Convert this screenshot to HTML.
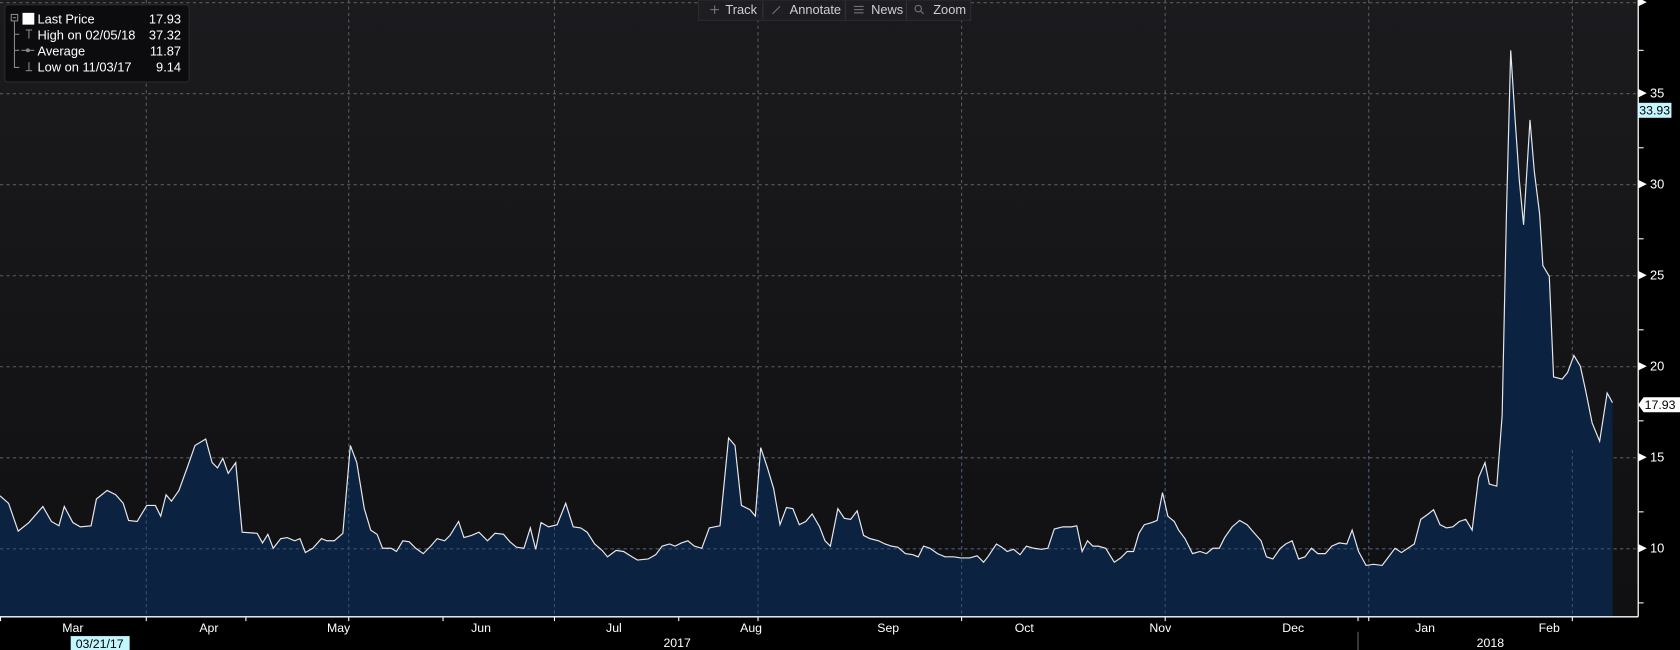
<!DOCTYPE html>
<html><head><meta charset="utf-8"><style>
html,body{margin:0;padding:0;background:#000;overflow:hidden}
svg{display:block}
text{font-family:"Liberation Sans","DejaVu Sans",sans-serif}
</style></head><body>
<svg width="1680" height="650" viewBox="0 0 1568 607" preserveAspectRatio="none" xmlns="http://www.w3.org/2000/svg">
<defs>
<linearGradient id="bg" x1="0" y1="0" x2="0" y2="1"><stop offset="0" stop-color="#1b1b1e"/><stop offset="1" stop-color="#101012"/></linearGradient>
</defs>
<rect x="0" y="0" width="1568" height="607" fill="#000"/>
<rect x="0" y="0" width="1529" height="576" fill="url(#bg)"/>
<g stroke="#5a5a5e" stroke-width="1" stroke-dasharray="3,3">
<line x1="0" y1="2.5" x2="1529" y2="2.5"/>
<line x1="0" y1="87.5" x2="1529" y2="87.5"/>
<line x1="0" y1="172.5" x2="1529" y2="172.5"/>
<line x1="0" y1="257.5" x2="1529" y2="257.5"/>
<line x1="0" y1="342.5" x2="1529" y2="342.5"/>
<line x1="0" y1="427.5" x2="1529" y2="427.5"/>
<line x1="0" y1="512.5" x2="1529" y2="512.5"/>
<line x1="136.5" y1="0" x2="136.5" y2="576"/>
<line x1="325.5" y1="0" x2="325.5" y2="576"/>
<line x1="517.5" y1="0" x2="517.5" y2="576"/>
<line x1="707.5" y1="0" x2="707.5" y2="576"/>
<line x1="897.5" y1="0" x2="897.5" y2="576"/>
<line x1="1087.5" y1="0" x2="1087.5" y2="576"/>
<line x1="1277.5" y1="0" x2="1277.5" y2="576"/>
<line x1="1467.5" y1="0" x2="1467.5" y2="576"/>
</g>
<polygon fill="#0b2340" points="0,576 0,463 8,470 17,496 27,488 40,473 48,487 55,491 60,473 68,488 75,492 85,491 90,466 100,458 108,462 115,470 120,486 128,487 137,472 145,472 150,482 155,462 160,468 167,458 175,436 182,416 192,410 198,432 203,437 208,428 213,442 220,432 226,497 240,498 245,507 250,499 255,512 262,503 268,502 275,505 280,503 285,516 292,512 300,503 305,505 312,505 320,498 327,416 333,432 340,475 346,495 352,499 357,512 365,512 370,515 376,505 382,506 388,512 395,517 402,510 408,503 415,505 420,500 428,487 433,502 440,500 447,497 455,505 462,498 470,499 476,506 482,511 489,512 495,493 500,513 505,488 512,492 520,490 528,470 535,492 542,493 548,497 555,508 562,514 567,520 575,514 582,515 590,520 595,523 605,522 612,518 618,510 625,508 630,510 636,507 642,505 648,510 655,512 662,493 672,491 680,409 686,416 692,472 700,476 705,482 710,418 716,436 722,456 728,490 734,474 740,475 746,490 752,487 758,480 765,492 770,505 775,510 782,475 788,484 794,485 800,477 806,500 812,503 820,505 826,508 832,510 838,511 845,517 852,518 857,520 862,510 868,512 875,517 882,520 890,520 897,521 905,521 912,519 918,525 922,520 930,508 935,511 940,515 946,513 952,518 958,510 965,512 972,513 978,512 984,494 992,492 1000,492 1005,491 1010,515 1015,505 1020,510 1025,510 1032,512 1040,525 1046,521 1052,515 1058,515 1063,498 1068,490 1075,488 1080,486 1085,460 1090,482 1096,487 1100,495 1106,503 1113,517 1120,515 1126,517 1132,512 1138,512 1143,502 1150,492 1157,486 1164,490 1170,497 1177,505 1182,520 1188,522 1195,512 1200,508 1206,505 1212,522 1218,520 1224,512 1230,517 1237,517 1243,510 1250,507 1257,508 1262,495 1268,515 1275,528 1282,527 1290,528 1296,520 1302,512 1308,516 1314,512 1320,508 1326,485 1333,480 1338,476 1344,490 1350,493 1356,492 1362,487 1368,485 1374,495 1380,446 1386,432 1390,452 1397,454 1402,388 1406,200 1410,47 1414,110 1418,168 1422,210 1428,112 1432,160 1437,200 1440,248 1446,258 1450,352 1458,354 1463,348 1469,332 1475,342 1480,365 1486,395 1493,412 1500,367 1505,376 1505,576"/>
<g stroke="#3a5270" stroke-width="1" stroke-dasharray="3,3">
<line x1="136.5" y1="420" x2="136.5" y2="576"/><line x1="325.5" y1="420" x2="325.5" y2="576"/><line x1="517.5" y1="420" x2="517.5" y2="576"/><line x1="707.5" y1="420" x2="707.5" y2="576"/><line x1="897.5" y1="420" x2="897.5" y2="576"/><line x1="1087.5" y1="420" x2="1087.5" y2="576"/><line x1="1277.5" y1="420" x2="1277.5" y2="576"/><line x1="1467.5" y1="420" x2="1467.5" y2="576"/>
<line x1="0" y1="512.5" x2="1505" y2="512.5"/>
</g>
<polyline fill="none" stroke="#e8e8ec" stroke-width="1.1" points="0,463 8,470 17,496 27,488 40,473 48,487 55,491 60,473 68,488 75,492 85,491 90,466 100,458 108,462 115,470 120,486 128,487 137,472 145,472 150,482 155,462 160,468 167,458 175,436 182,416 192,410 198,432 203,437 208,428 213,442 220,432 226,497 240,498 245,507 250,499 255,512 262,503 268,502 275,505 280,503 285,516 292,512 300,503 305,505 312,505 320,498 327,416 333,432 340,475 346,495 352,499 357,512 365,512 370,515 376,505 382,506 388,512 395,517 402,510 408,503 415,505 420,500 428,487 433,502 440,500 447,497 455,505 462,498 470,499 476,506 482,511 489,512 495,493 500,513 505,488 512,492 520,490 528,470 535,492 542,493 548,497 555,508 562,514 567,520 575,514 582,515 590,520 595,523 605,522 612,518 618,510 625,508 630,510 636,507 642,505 648,510 655,512 662,493 672,491 680,409 686,416 692,472 700,476 705,482 710,418 716,436 722,456 728,490 734,474 740,475 746,490 752,487 758,480 765,492 770,505 775,510 782,475 788,484 794,485 800,477 806,500 812,503 820,505 826,508 832,510 838,511 845,517 852,518 857,520 862,510 868,512 875,517 882,520 890,520 897,521 905,521 912,519 918,525 922,520 930,508 935,511 940,515 946,513 952,518 958,510 965,512 972,513 978,512 984,494 992,492 1000,492 1005,491 1010,515 1015,505 1020,510 1025,510 1032,512 1040,525 1046,521 1052,515 1058,515 1063,498 1068,490 1075,488 1080,486 1085,460 1090,482 1096,487 1100,495 1106,503 1113,517 1120,515 1126,517 1132,512 1138,512 1143,502 1150,492 1157,486 1164,490 1170,497 1177,505 1182,520 1188,522 1195,512 1200,508 1206,505 1212,522 1218,520 1224,512 1230,517 1237,517 1243,510 1250,507 1257,508 1262,495 1268,515 1275,528 1282,527 1290,528 1296,520 1302,512 1308,516 1314,512 1320,508 1326,485 1333,480 1338,476 1344,490 1350,493 1356,492 1362,487 1368,485 1374,495 1380,446 1386,432 1390,452 1397,454 1402,388 1406,200 1410,47 1414,110 1418,168 1422,210 1428,112 1432,160 1437,200 1440,248 1446,258 1450,352 1458,354 1463,348 1469,332 1475,342 1480,365 1486,395 1493,412 1500,367 1505,376"/>
<line x1="1529" y1="0" x2="1529" y2="576" stroke="#fff" stroke-width="1.2"/>
<line x1="0" y1="576" x2="1529" y2="576" stroke="#fff" stroke-width="1.2"/>
<g fill="#fff">
<polygon points="1529,-2 1537,2 1529,6"/>
<polygon points="1529,83 1537,87 1529,91"/>
<polygon points="1529,168 1537,172 1529,176"/>
<polygon points="1529,253 1537,257 1529,261"/>
<polygon points="1529,338 1537,342 1529,346"/>
<polygon points="1529,423 1537,427 1529,431"/>
<polygon points="1529,508 1537,512 1529,516"/>
</g>
<g stroke="#fff" stroke-width="1">
<line x1="1529" y1="47" x2="1534" y2="47"/><line x1="1529" y1="138" x2="1534" y2="138"/><line x1="1529" y1="223" x2="1534" y2="223"/><line x1="1529" y1="308" x2="1534" y2="308"/><line x1="1529" y1="393" x2="1534" y2="393"/><line x1="1529" y1="478" x2="1534" y2="478"/><line x1="1529" y1="563" x2="1534" y2="563"/>
<line x1="0.5" y1="576" x2="0.5" y2="580"/><line x1="136.5" y1="576" x2="136.5" y2="580"/><line x1="229.5" y1="576" x2="229.5" y2="580"/><line x1="325.5" y1="576" x2="325.5" y2="580"/><line x1="413.5" y1="576" x2="413.5" y2="580"/><line x1="517.5" y1="576" x2="517.5" y2="580"/><line x1="633.5" y1="576" x2="633.5" y2="580"/><line x1="707.5" y1="576" x2="707.5" y2="580"/><line x1="897.5" y1="576" x2="897.5" y2="580"/><line x1="1087.5" y1="576" x2="1087.5" y2="580"/><line x1="1267.5" y1="576" x2="1267.5" y2="580"/><line x1="1277.5" y1="576" x2="1277.5" y2="580"/><line x1="1467.5" y1="576" x2="1467.5" y2="580"/>
<line x1="1267.5" y1="590" x2="1267.5" y2="607" stroke="#666"/>
</g>
<g fill="#fff" font-size="12">
<text x="1540" y="91">35</text><text x="1540" y="176">30</text><text x="1540" y="261">25</text><text x="1540" y="346">20</text><text x="1540" y="431">15</text><text x="1540" y="516">10</text>
</g>
<rect x="1529" y="96" width="31" height="14" fill="#c4f6ff"/>
<text x="1530" y="107" font-size="11.5" fill="#000">33.93</text>
<polygon points="1529,378 1534,371 1568,371 1568,385 1534,385" fill="#fff"/>
<text x="1535" y="382" font-size="11.5" fill="#000">17.93</text>
<g fill="#fff" font-size="11.5" text-anchor="middle">
<text x="68" y="590">Mar</text><text x="195" y="590">Apr</text><text x="316" y="590">May</text><text x="449" y="590">Jun</text><text x="573" y="590">Jul</text><text x="701" y="590">Aug</text><text x="829" y="590">Sep</text><text x="956" y="590">Oct</text><text x="1083" y="590">Nov</text><text x="1207" y="590">Dec</text><text x="1330" y="590">Jan</text><text x="1446" y="590">Feb</text>
<text x="632" y="604">2017</text><text x="1391" y="604">2018</text>
</g>
<rect x="66" y="594" width="55" height="13" fill="#c4f6ff"/>
<text x="93" y="605" font-size="11.5" fill="#000" text-anchor="middle">03/21/17</text>
<rect x="652" y="0" width="254" height="19" fill="#1e1e22" stroke="#2c2c30"/>
<g fill="#cfcfd3" font-size="12">
<text x="677" y="13">Track</text><text x="737" y="13">Annotate</text><text x="813" y="13">News</text><text x="871" y="13">Zoom</text>
</g>
<g stroke="#777" fill="none" stroke-width="1">
<line x1="663" y1="9" x2="671" y2="9"/><line x1="667" y1="5" x2="667" y2="13"/>
<line x1="721" y1="13" x2="728" y2="6"/>
<line x1="797" y1="6" x2="806" y2="6"/><line x1="797" y1="9" x2="806" y2="9"/><line x1="797" y1="12" x2="806" y2="12"/>
<circle cx="857" cy="8" r="3"/><line x1="859" y1="10" x2="862" y2="13"/>
</g>
<g stroke="#333" stroke-width="1"><line x1="712" y1="1" x2="712" y2="18"/><line x1="789" y1="1" x2="789" y2="18"/><line x1="846" y1="1" x2="846" y2="18"/></g>
<rect x="4.5" y="4.5" width="172" height="72" rx="3" fill="#0c0c0f" stroke="#2a2a2e"/>
<g stroke="#888" fill="none" stroke-width="1">
<rect x="10.5" y="13.5" width="6" height="6"/><line x1="12" y1="16.5" x2="15" y2="16.5"/>
<polyline points="13.5,20 13.5,63 18,63"/>
<line x1="13.5" y1="47" x2="18" y2="47"/><line x1="13.5" y1="32" x2="18" y2="32"/>
<line x1="24" y1="28" x2="30" y2="28"/><line x1="27" y1="28" x2="27" y2="36"/>
<line x1="20" y1="47" x2="32" y2="47"/>
<line x1="24" y1="66" x2="30" y2="66"/><line x1="27" y1="58" x2="27" y2="66"/>
</g>
<circle cx="26" cy="47" r="1.8" fill="#888"/>
<rect x="21" y="12" width="11" height="11" fill="#fff"/>
<g fill="#fff" font-size="12">
<text x="35" y="22">Last Price</text><text x="35" y="37">High on 02/05/18</text><text x="35" y="52">Average</text><text x="35" y="67">Low on 11/03/17</text>
</g>
<g fill="#fff" font-size="12" text-anchor="end">
<text x="169" y="22">17.93</text><text x="169" y="37">37.32</text><text x="169" y="52">11.87</text><text x="169" y="67">9.14</text>
</g>
</svg>
</body></html>
